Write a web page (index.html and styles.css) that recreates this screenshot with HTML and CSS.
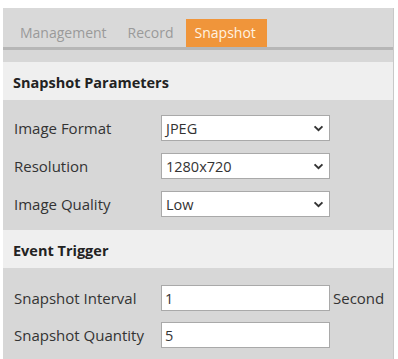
FILE: index.html
```html
<!DOCTYPE html>
<html>
<head>
<meta charset="utf-8">
<link rel="stylesheet" href="styles.css">
</head>
<body>
<div class="panel">
  <div class="tabs">
    <div class="tab">Management</div>
    <div class="tab">Record</div>
    <div class="tab active">Snapshot</div>
  </div>
  <div class="spacer"></div>
  <div class="section-head">Snapshot Parameters</div>
  <div class="section-body first">
    <div class="row">
      <span class="label">Image Format</span>
      <div class="select"><span>JPEG</span><svg class="chev" viewBox="0 0 12 8" width="11" height="7"><path d="M1.5 1.5 L6 6 L10.5 1.5" fill="none" stroke="#333" stroke-width="2.2"/></svg></div>
    </div>
    <div class="row">
      <span class="label">Resolution</span>
      <div class="select"><span>1280x720</span><svg class="chev" viewBox="0 0 12 8" width="11" height="7"><path d="M1.5 1.5 L6 6 L10.5 1.5" fill="none" stroke="#333" stroke-width="2.2"/></svg></div>
    </div>
    <div class="row">
      <span class="label">Image Quality</span>
      <div class="select"><span>Low</span><svg class="chev" viewBox="0 0 12 8" width="11" height="7"><path d="M1.5 1.5 L6 6 L10.5 1.5" fill="none" stroke="#333" stroke-width="2.2"/></svg></div>
    </div>
  </div>
  <div class="section-head">Event Trigger</div>
  <div class="section-body second">
    <div class="row">
      <span class="label">Snapshot Interval</span>
      <div class="input">1</div>
      <span class="unit">Second</span>
    </div>
    <div class="row">
      <span class="label">Snapshot Quantity</span>
      <div class="input">5</div>
    </div>
  </div>
</div>
</body>
</html>
```
FILE: styles.css
```css
html, body {
  margin: 0;
  padding: 0;
  background: #ffffff;
}
body {
  font-family: "Open Sans", "Noto Sans", sans-serif;
  color: #333;
}
.panel {
  margin: 8px 4px 0 3px;
  background: #d7d7d7;
  border-right: 1px solid #c8c8c8;
  height: 351px;
}
.tabs {
  height: 39px;
  background: #d9d9d9;
  border-bottom: 3px solid #b6b6b6;
  display: flex;
  align-items: flex-end;
  padding-left: 8px;
}
.tab {
  font-size: 14px;
  color: #9a9a9a;
  height: 28px;
  line-height: 27px;
  padding: 0 9px;
  margin-right: 3px;
}
.tab.active {
  background: #f0953a;
  color: #fff3e2;
  padding: 0 11px 0 9px;
}
.spacer {
  height: 12px;
}
.section-head {
  background: #efefef;
  height: 38px;
  line-height: 42px;
  padding-left: 10px;
  font-weight: 700;
  font-size: 14.5px;
  color: #222;
}
.section-body {
  padding: 15px 0 13px 11px;
  display: flex;
  flex-direction: column;
  gap: 12px;
}
.section-body.second {
  padding-top: 17px;
  gap: 11px;
}
.row {
  display: flex;
  align-items: center;
  height: 26px;
}
.label {
  width: 147px;
  font-size: 15px;
  color: #333;
}
.select, .input {
  width: 167px;
  height: 24px;
  background: #fff;
  border: 1px solid #a9a9a9;
  display: flex;
  align-items: center;
  justify-content: space-between;
  font-size: 14.5px;
  color: #333;
}
.select span { padding-left: 4px; }
.input { padding-left: 3px; width: 164px; }
.chev { margin-right: 5px; }
.unit {
  margin-left: 3px;
  font-size: 15px;
  color: #333;
}
```
